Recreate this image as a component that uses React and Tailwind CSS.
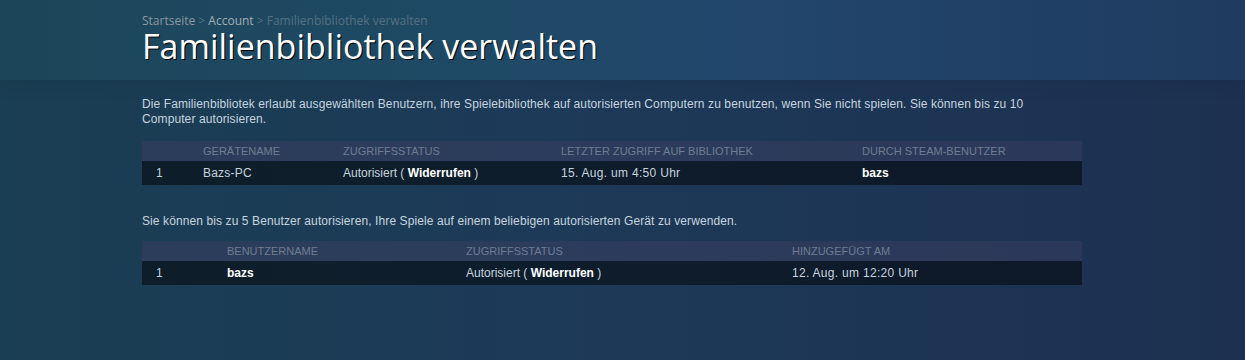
const devices = [
  { n: 1, name: "Bazs-PC", last: "15. Aug. um 4:50 Uhr", user: "bazs" },
];

const users = [{ n: 1, name: "bazs", added: "12. Aug. um 12:20 Uhr" }];

const Status = () => (
  <span>
    Autorisiert ( <span className="font-bold text-white">Widerrufen</span> )
  </span>
);

const App = () => {
  return (
    <div className="min-h-[360px] w-full bg-[linear-gradient(90deg,#1a3e53_0%,#1d3a58_45%,#1d3050_100%)] font-['Liberation_Sans',Arial,sans-serif] text-[12px] text-[#c6d4df]">
      <div className="h-[80px] bg-[linear-gradient(90deg,#1b4659_0%,#1f4a66_40%,#22466c_60%,#1f3b60_100%)] shadow-[0_8px_16px_rgba(0,0,0,0.06)]">
        <div className="ml-[142px] pt-[13px]">
          <div className="font-['Open_Sans',sans-serif] text-[12px] leading-[15px] text-[#8f98a0]">
            <span>Startseite</span>
            <span className="text-[#56707f]"> &gt; </span>
            <span className="text-[#a3adb6]">Account</span>
            <span className="text-[#56707f]"> &gt; Familienbibliothek verwalten</span>
          </div>
          <h1 className="font-['Open_Sans',sans-serif] text-[34px] font-normal leading-[36px] text-white [text-shadow:1px_1px_0_#000]">
            Familienbibliothek verwalten
          </h1>
        </div>
      </div>

      <div className="ml-[142px] w-[940px] pt-[17px] pb-[75px]">
        <p className="pr-[20px] leading-[15px] tracking-[0.1px]">
          Die Familienbibliotek erlaubt ausgewählten Benutzern, ihre Spielebibliothek auf autorisierten Computern zu benutzen, wenn Sie nicht spielen. Sie können bis zu 10 Computer autorisieren.
        </p>

        <div className="mt-[14px]">
          <div className="grid h-[20px] grid-cols-[61px_140px_218px_301px_1fr] items-center bg-[rgba(60,62,95,0.5)] text-[11px] uppercase text-[#6e7d91]">
            <div></div>
            <div>Gerätename</div>
            <div>Zugriffsstatus</div>
            <div>Letzter Zugriff auf Bibliothek</div>
            <div>Durch Steam-Benutzer</div>
          </div>
          {devices.map((d) => (
            <div key={d.n} className="grid h-[24px] grid-cols-[61px_140px_218px_301px_1fr] items-center bg-black/50">
              <div className="pl-[14px]">{d.n}</div>
              <div className="tracking-[0.2px]">{d.name}</div>
              <Status />
              <div className="tracking-[0.3px]">{d.last}</div>
              <div className="font-bold text-white">{d.user}</div>
            </div>
          ))}
        </div>

        <p className="mt-[29px] leading-[15px] tracking-[0.1px]">
          Sie können bis zu 5 Benutzer autorisieren, Ihre Spiele auf einem beliebigen autorisierten Gerät zu verwenden.
        </p>

        <div className="mt-[12px]">
          <div className="grid h-[20px] grid-cols-[85px_239px_326px_1fr] items-center bg-[rgba(60,62,95,0.5)] text-[11px] uppercase text-[#6e7d91]">
            <div></div>
            <div>Benutzername</div>
            <div>Zugriffsstatus</div>
            <div>Hinzugefügt am</div>
          </div>
          {users.map((u) => (
            <div key={u.n} className="grid h-[24px] grid-cols-[85px_239px_326px_1fr] items-center bg-black/50">
              <div className="pl-[14px]">{u.n}</div>
              <div className="font-bold text-white">{u.name}</div>
              <Status />
              <div className="tracking-[0.3px]">{u.added}</div>
            </div>
          ))}
        </div>
      </div>
    </div>
  );
};

export default App;
